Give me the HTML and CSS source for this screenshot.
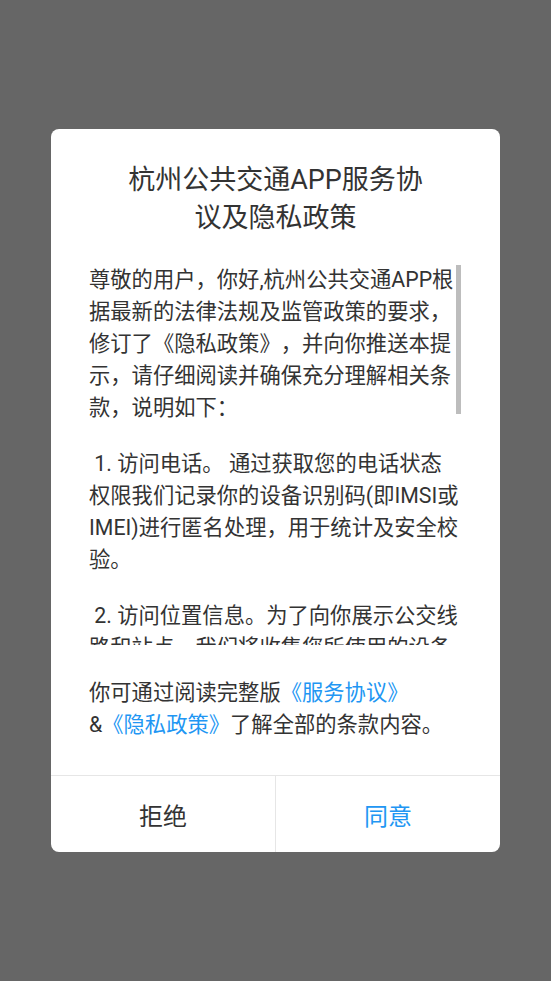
FILE: index.html
```html
<!DOCTYPE html>
<html lang="zh-CN">

<head>
    <meta charset="UTF-8">
    <meta name="viewport" content="width=device-width, initial-scale=1.0">
    <title>服务协议及隐私政策</title>
    <link rel="stylesheet" href="styles.css">
</head>

<body>
    <div class="overlay">
        <div class="dialog">
            <h2 class="dialog-title">杭州公共交通APP服务协议及隐私政策</h2>
            <div class="scroll-wrap">
                <div class="scroll-body">
                    <p>尊敬的用户，你好,杭州公共交通APP根据最新的法律法规及监管政策的要求，修订了《隐私政策》，并向你推送本提示，请仔细阅读并确保充分理解相关条款，说明如下：</p>
                    <p>&nbsp;1. 访问电话。 通过获取您的电话状态权限我们记录你的设备识别码(即IMSI或IMEI)进行匿名处理，用于统计及安全校验。</p>
                    <p>&nbsp;2. 访问位置信息。为了向你展示公交线路和站点，我们将收集您所使用的设备的位置信息，用于为您推荐附近的公交站点、线路及实时到站信息。</p>
                    <p>&nbsp;3. 访问相机。用于扫码乘车以及意见反馈时拍摄并上传照片，我们不会在未经允许的情况下开启相机。</p>
                    <p>&nbsp;4. 访问存储。用于缓存线路数据、图片等信息，减少流量消耗，提升使用体验。</p>
                    <p>我们将严格遵守相关法律法规，保护您的个人信息安全。如您同意，请点击“同意”开始接受我们的服务。</p>
                </div>
                <div class="scroll-thumb"></div>
            </div>
            <p class="dialog-note">你可通过阅读完整版<a href="#">《服务协议》</a><br>&amp;<a href="#">《隐私政策》</a>了解全部的条款内容。</p>
            <div class="dialog-buttons">
                <button class="btn-refuse">拒绝</button>
                <button class="btn-agree">同意</button>
            </div>
        </div>
    </div>
</body>

</html>
```

FILE: styles.css
```css
* {
    box-sizing: border-box;
    margin: 0;
    padding: 0;
}

body {
    font-family: Roboto, "Noto Sans CJK SC", sans-serif;
    background-color: #666666;
    color: #333333;
    text-spacing-trim: space-all;
}

.overlay {
    height: 100vh;
    display: flex;
    align-items: center;
    justify-content: center;
}

.dialog {
    width: 449px;
    height: 723px;
    background: white;
    border-radius: 8px;
    display: flex;
    flex-direction: column;
    overflow: hidden;
}

.dialog-title {
    font-size: 27px;
    font-weight: normal;
    line-height: 38px;
    text-align: center;
    padding: 32px 68px 0;
    margin-bottom: 27px;
}

.scroll-wrap {
    position: relative;
    margin: 0 39px 0 38px;
    height: 381px;
}

.scroll-body {
    height: 100%;
    overflow-y: auto;
    scrollbar-width: none;
    font-size: 21.3px;
    line-height: 32px;
}

.scroll-body p {
    margin-bottom: 24px;
}

.scroll-thumb {
    position: absolute;
    top: 1px;
    right: 0;
    width: 5px;
    height: 149px;
    background: #bdbdbd;
}

.dialog-note {
    margin: 32px 38px 0;
    font-size: 21.3px;
    line-height: 32px;
}

.dialog-note a {
    color: #2196f3;
    text-decoration: none;
}

.dialog-buttons {
    margin-top: auto;
    display: flex;
    border-top: 1px solid #e6e6e6;
    height: 77px;
}

.dialog-buttons button {
    flex: 1;
    background: none;
    border: none;
    font-family: inherit;
    font-size: 24px;
    color: #333333;
    cursor: pointer;
}

.dialog-buttons .btn-refuse {
    border-right: 1px solid #e6e6e6;
}

.dialog-buttons .btn-agree {
    color: #2196f3;
}
```
